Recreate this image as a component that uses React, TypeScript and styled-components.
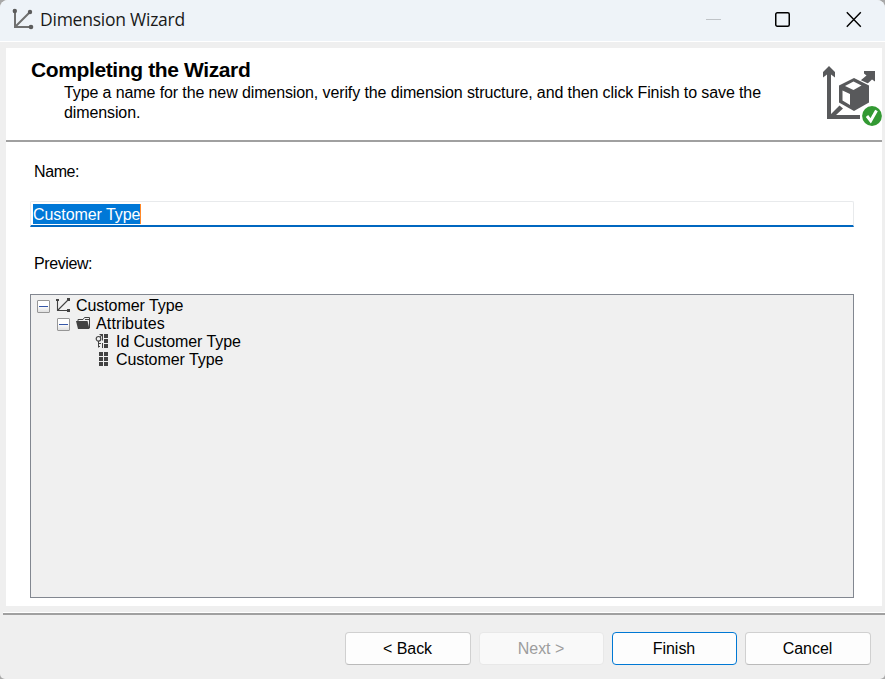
import React from "react";
import styled, { createGlobalStyle } from "styled-components";

const GlobalStyle = createGlobalStyle`
  * { box-sizing: border-box; }
  html, body { margin: 0; padding: 0; overflow: hidden; background: #a8a8a8; }
  body { font: 16px/20px "Liberation Sans", Arial, sans-serif; color: #000; }
`;

const Window = styled.div`
  width: 885px;
  height: 679px;
  display: flex;
  flex-direction: column;
  background: #efefef;
  border-radius: 8px 8px 5px 5px;
  overflow: hidden;
`;

const TitleBar = styled.header`
  flex: none;
  height: 42px;
  display: flex;
  align-items: flex-start;
  padding-left: 12px;
  background: #eef3f8;
  border-bottom: 1px solid #fff;
`;

const TitleIcon = styled.svg`
  flex: none;
  margin-top: 8px;
`;

const Title = styled.h1`
  flex: 1;
  margin: 7px 0 0 6px;
  font: 400 17.5px/24px "Open Sans", "Noto Sans", sans-serif;
  letter-spacing: -0.24px;
  color: #191919;
`;

const Controls = styled.div`
  display: flex;
  margin: 11px 23px 0 0;

  svg + svg { margin-left: 53px; }
  svg:last-child { margin-left: 55px; }
`;

const Page = styled.main`
  flex: none;
  height: 558px;
  margin: 6px 3px 0 6px;
  background: #fff;
`;

const Banner = styled.section`
  height: 94px;
  display: flex;
  justify-content: space-between;
  padding-left: 25px;
  border-bottom: 2px solid #a0a0a0;
`;

const Heading = styled.h2`
  margin: 10px 0 0;
  font-size: 21px;
  line-height: 24px;
  letter-spacing: -0.38px;
  white-space: nowrap;
`;

const Description = styled.p`
  width: 715px;
  margin: 1px 0 0 33px;
  letter-spacing: -0.11px;
`;

const BannerArt = styled.svg`
  flex: none;
  margin-top: 16px;
`;

const Form = styled.section`
  display: flex;
  flex-direction: column;
  padding: 20px 28px 0 24px;
`;

const Label = styled.label`
  height: 20px;
  padding-left: 4px;
  letter-spacing: -0.4px;
`;

const Field = styled.div`
  height: 26px;
  margin: 19px 0 27px;
  padding: 2px 2px 0;
  border: 1px solid #e8eaec;
  border-bottom: 2px solid #0067c0;
  border-radius: 2px 2px 0 0;
`;

const Selection = styled.span`
  display: inline-block;
  height: 20px;
  background: #0078d7;
  border-right: 1px solid #ff8728;
  color: #fff;
  line-height: 21px;
  letter-spacing: -0.06px;
  vertical-align: top;
`;

const Tree = styled.div`
  height: 304px;
  margin-top: 20px;
  padding: 2px 0 0 6px;
  border: 1px solid #828790;
  background: #f0f0f0;
`;

const TreeRow = styled.div<{ $indent: number; $tracking?: number }>`
  height: 18px;
  display: flex;
  align-items: center;
  padding-left: ${(p) => p.$indent}px;
  line-height: 18px;
  letter-spacing: ${(p) => p.$tracking ?? -0.07}px;
`;

const TreeIcon = styled.svg`
  flex: none;
  margin: -2px 5px 0;
`;

const Toggle = styled.span`
  width: 13px;
  height: 13px;
  margin-top: 1px;
  display: flex;
  align-items: center;
  justify-content: center;
  border: 1px solid #969696;
  border-radius: 1px;
  background: linear-gradient(#fff 45%, #e0e0e0);

  &::before { content: ""; width: 9px; height: 1px; background: #3557a8; }
`;

const Footer = styled.footer`
  flex: 1;
  display: flex;
  gap: 8px;
  justify-content: flex-end;
  margin: 6px 0 0 3px;
  padding: 17px 14px 0 0;
  border-top: 1px solid #fff;
  box-shadow: inset 0 2px #a0a0a0;
`;

const Button = styled.button<{ $primary?: boolean; $width?: number }>`
  width: ${(p) => p.$width ?? 126}px;
  height: 33px;
  margin-top: 2px;
  padding: 1px 1px 0 0;
  border: 1px solid ${(p) => (p.$primary ? "#0078d4" : "#d0d0d0")};
  border-bottom-color: ${(p) => (p.$primary ? "#0078d4" : "#bababa")};
  border-radius: 4px;
  background: #fdfdfd;
  color: #000;
  font: inherit;
  letter-spacing: -0.05px;

  &:disabled { background: #f9f9f9; border-color: #e8e8e8; color: #9d9d9d; }
`;

const blocks = [1, 6, 11];

export default function App() {
  return (
    <>
      <GlobalStyle />
      <Window>
        <TitleBar>
          <TitleIcon width="22" height="23" viewBox="0 0 22 23" fill="none" stroke="#707070" strokeWidth="2">
            <path d="M3 3V19H19M3 19L18 4" />
            <g fill="#5c5c5c" stroke="none">
              <circle cx="2.8" cy="3" r="2.2" />
              <circle cx="18" cy="4" r="2.2" />
              <circle cx="19" cy="19" r="2.3" />
            </g>
          </TitleIcon>
          <Title>Dimension Wizard</Title>
          <Controls>
            <svg width="16" height="18"><path d="M1 8.5H16" stroke="#bfc3c7" /></svg>
            <svg width="17" height="18" fill="none" stroke="#000" strokeWidth="1.5"><rect x="1.75" y="1.75" width="13.5" height="13.5" rx="1.5" /></svg>
            <svg width="16" height="18" stroke="#000" strokeWidth="1.4"><path d="M0.8 1.2L14.8 15.8M14.8 1.2L0.8 15.8" /></svg>
          </Controls>
        </TitleBar>
        <Page>
          <Banner>
            <div>
              <Heading>Completing the Wizard</Heading>
              <Description>
                Type a name for the new dimension, verify the dimension structure, and then click Finish to save the dimension.
              </Description>
            </div>
            <BannerArt width="60" height="64" viewBox="0 0 60 64">
              <g fill="#58595b">
                <path d="M7 2L13 8V13.5L9 10.5V50L17.5 41.5L21 44.5L14 51H38V55H5V10.5L1 13.5V8Z" />
                <path d="M42 7H53V17.5L50 15.5L43.5 21.5L38.5 16.5L44.5 11.5L42 9.5Z" />
              </g>
              <path d="M32 13L48.2 20.5V39.5L32 48.5L15.8 39.5V20.5Z" fill="#fff" />
              <path d="M32 14L47 21.5V38.5L32 47L17 38.5V21.5Z" fill="#58595b" />
              <path d="M31.5 17.5L39.5 21.5L31.5 26L23 22ZM20.5 26.5L28 30V41L20.5 36.5Z" fill="#fff" />
              <circle cx="50" cy="52" r="10.8" fill="#fff" />
              <circle cx="50" cy="52" r="9.9" fill="#339933" />
              <path d="M45 52L48.7 56.8L54.5 46.5" fill="none" stroke="#fff" strokeWidth="3" />
            </BannerArt>
          </Banner>
          <Form>
            <Label>Name:</Label>
            <Field><Selection>Customer Type</Selection></Field>
            <Label>Preview:</Label>
            <Tree>
              <TreeRow $indent={0}>
                <Toggle />
                <TreeIcon width="16" height="16" fill="none" stroke="#424242">
                  <path d="M2.5 3V13.5H13M2.5 13.5L13 3" strokeWidth="1.1" />
                  <path d="M1 2H4V4H1ZM12 1H15V4H12ZM12 12H15V15H12Z" fill="#424242" stroke="none" />
                </TreeIcon>
                Customer Type
              </TreeRow>
              <TreeRow $indent={20} $tracking={0.13}>
                <Toggle />
                <TreeIcon width="16" height="16">
                  <path d="M3 6V4.5H8L9.5 2.5H14.5V13" fill="none" stroke="#424242" />
                  <path d="M1 6H12.5L14.5 14H3ZM10 4H14V5H10Z" fill="#424242" />
                </TreeIcon>
                Attributes
              </TreeRow>
              <TreeRow $indent={53}>
                <TreeIcon width="16" height="16" fill="#424242">
                  {blocks.map((y) => <rect key={y} x="9" y={y} width="4" height="4" />)}
                  <path d="M4 1H8V3H6Z" />
                  <circle cx="3.5" cy="5.8" r="2.3" fill="none" stroke="#424242" strokeWidth="1.2" />
                  <path d="M3.5 8V14.5M3.5 10.5H6M3.5 13.5H5M5 4L7.5 2V7.5M7.5 10V15" fill="none" stroke="#424242" />
                </TreeIcon>
                Id Customer Type
              </TreeRow>
              <TreeRow $indent={53}>
                <TreeIcon width="16" height="16" fill="#424242">
                  {blocks.map((y) => (
                    <React.Fragment key={y}>
                      <rect x="4" y={y} width="4" height="4" />
                      <rect x="9" y={y} width="4" height="4" />
                    </React.Fragment>
                  ))}
                </TreeIcon>
                Customer Type
              </TreeRow>
            </Tree>
          </Form>
        </Page>
        <Footer>
          <Button>&lt; Back</Button>
          <Button $width={125} disabled>Next &gt;</Button>
          <Button $width={125} $primary>Finish</Button>
          <Button>Cancel</Button>
        </Footer>
      </Window>
    </>
  );
}
